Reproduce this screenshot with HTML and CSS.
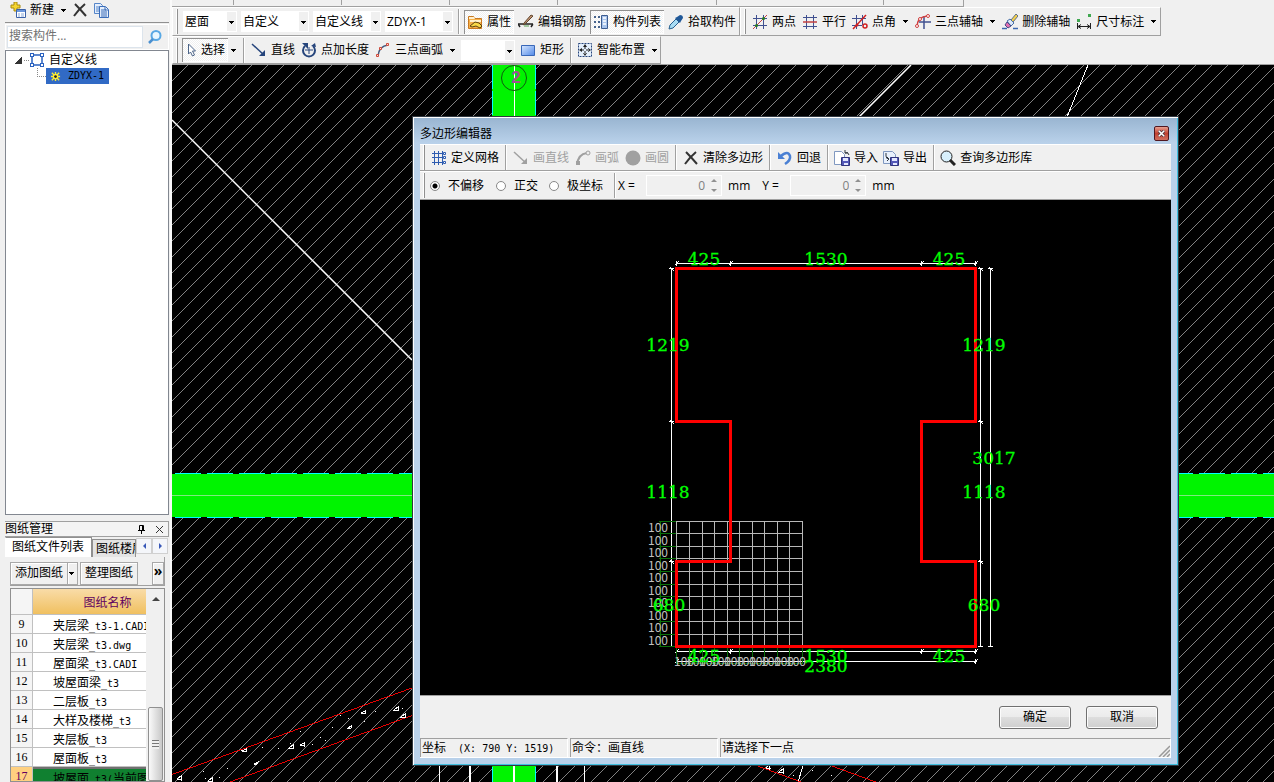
FILE: index.html
```html
<!DOCTYPE html>
<html lang="zh-CN">
<head>
<meta charset="utf-8">
<title>多边形编辑器</title>
<link rel="stylesheet" href="styles.css">
</head>
<body>
<svg class="defs" aria-hidden="true">
  <symbol id="i-new" viewBox="0 0 16 16"><path d="M4 0h3v3h3v3H7v3H4V6H1V3h3z" fill="#f5d530" stroke="#a88a10"/><path d="M6.500 7.500h9v8h-9z" fill="#fff" stroke="#3c62a8"/><path d="M7 8h8v2H7z" fill="#6a96dc"/><path d="M8 12h2M11 12h3M8 14h2M11 14h3" stroke="#8aa8d8"/></symbol>
  <symbol id="i-x" viewBox="0 0 16 16"><path d="M3 2Q8 7 14 14M13 2Q7 7 2 14" fill="none" stroke="#333" stroke-width="2"/></symbol>
  <symbol id="i-copy" viewBox="0 0 16 16"><path d="M1.500 1.500h6l2 2v8h-8z" fill="#e4eefc" stroke="#5585c8"/><path d="M3 5h5M3 7h5M3 9h4" stroke="#5585c8"/><path d="M6.500 4.500h6l3 3v8h-9z" fill="#e4eefc" stroke="#3b6db8"/><path d="M8 8h5M8 10h6M8 12h6M8 14h6M12 5v3h3" fill="none" stroke="#3b6db8"/></symbol>
  <symbol id="i-search" viewBox="0 0 16 16"><circle cx="9" cy="6.500" r="4.500" fill="#e8f7ff" stroke="#58a8e4" stroke-width="2"/><path d="M6 10l-4 4" stroke="#4a90d0" stroke-width="2.500"/></symbol>
  <symbol id="i-poly" viewBox="0 0 16 16"><path d="M3 3h10v10H3z" fill="#fff" stroke="#2a62c0" stroke-width="1.500"/><path d="M1 1h4v4H1zM11 1h4v4h-4zM1 11h4v4H1zM11 11h4v4h-4z" fill="#2a62c0"/><path d="M2 2h2v2H2zM12 2h2v2h-2zM2 12h2v2H2zM12 12h2v2h-2z" fill="#fff"/></symbol>
  <symbol id="i-gear" viewBox="0 0 12 12"><path d="M6 1v10M1 6h10M2 2l8 8M10 2l-8 8" stroke="#ffee30" stroke-width="1.500"/><circle cx="6" cy="6" r="3" fill="#ffee30"/><circle cx="6" cy="6" r="1.500" fill="#222"/></symbol>
  <symbol id="i-prop" viewBox="0 0 16 16"><path d="M1.500 14.500v-12h5l1 2h7v10z" fill="#f6b04a" stroke="#c87820"/><path d="M2 3h5l1 2H2zM3 6h11v2H3z" fill="#fff0cc"/><path d="M3 12l5-4 4 1 3 3-2 2-4-2-4 1z" fill="#f8d848" stroke="#5c4310"/></symbol>
  <symbol id="i-rebar" viewBox="0 0 16 16"><path d="M0 10h15M2 13L0 10M15 10l-2 3" fill="none" stroke="#222" stroke-width="1.500"/><path d="M6 9l7-8 2 1-7 7-3 2z" fill="#c09070" stroke="#604830"/><path d="M6 12h5" stroke="#58a050"/></symbol>
  <symbol id="i-list" viewBox="0 0 16 16"><path d="M1 2h2v2H1zM1 7h2v2H1zM1 12h2v2H1zM5 2h2v2H5zM5 7h2v2H5zM5 12h2v2H5z" fill="#47638c"/><path d="M8.500 1.500h6v13h-6z" fill="#a8c4ec" stroke="#3c5c90"/><path d="M10 4h3M10 7h3M10 10h3" stroke="#fff" stroke-width="1.500"/></symbol>
  <symbol id="i-pick" viewBox="0 0 16 16"><path d="M1 15l1-4 6-6 3 3-6 6z" fill="#a8dcf4" stroke="#276090"/><path d="M7 4l5 5 1-2 2-3q0-3-3-3l-3 2z" fill="#205898"/></symbol>
  <symbol id="i-two" viewBox="0 0 16 16"><path d="M4.500 1v14M11.500 1v14M1 4.500h14M1 11.500h14" stroke="#405090"/><path d="M1 15L15 1" stroke="#c84040"/><circle cx="4.500" cy="11.500" r="1.500" fill="#248024"/><circle cx="11.500" cy="4.500" r="1.500" fill="#248024"/></symbol>
  <symbol id="i-par" viewBox="0 0 16 16"><path d="M4.500 1v14M11.500 1v14M1 3.500h14M1 12.500h14" stroke="#405090"/><path d="M1 8h14" stroke="#c04040" stroke-width="1.500"/></symbol>
  <symbol id="i-ang" viewBox="0 0 16 16"><path d="M4.500 1v14M10.500 1v10M0 4.500h14M0 11.500h10" stroke="#405090"/><path d="M1 15L14 1" stroke="#d02020" stroke-width="1.500"/><circle cx="13" cy="12" r="2" fill="none" stroke="#d02020" stroke-width="1.500"/><circle cx="5" cy="11" r="1.500" fill="#d02020"/></symbol>
  <symbol id="i-three" viewBox="0 0 16 16"><path d="M9 2v13M4 8h12" stroke="#405090" stroke-width="1.500"/><path d="M2 13Q2 3 12 2" fill="none" stroke="#d04040" stroke-width="1.500"/><circle cx="2" cy="12" r="1.500" fill="#fff" stroke="#d04040"/><circle cx="5" cy="5" r="1.500" fill="#fff" stroke="#d04040"/><circle cx="13" cy="2" r="1.500" fill="#fff" stroke="#d04040"/></symbol>
  <symbol id="i-del" viewBox="0 0 16 16"><path d="M9 6l5-6 2 2-5 6z" fill="#f4d04c" stroke="#607088"/><path d="M5 7l3-2 4 4-3 3z" fill="#dce8f8" stroke="#4870a8"/><path d="M3 11l2-3 4 4-3 2z" fill="#e070b0" stroke="#484888"/><path d="M0 14.500h5M11 14.500h5" stroke="#3c68b0" stroke-width="1.500"/></symbol>
  <symbol id="i-dim" viewBox="0 0 16 16"><path d="M1.500 9v6M14.500 9v6M2 12.500h12M5 10.500l-3 2 3 2M11 10.500l3 2-3 2" fill="none" stroke="#222"/><path d="M1 5h3v3H1zM12 0h3v3h-3z" fill="#40a850"/></symbol>
  <symbol id="i-cursor" viewBox="0 0 12 16"><path d="M3.500 2v10l2-2 2 4 2-1-2-4h3z" fill="#fff" stroke="#4c6488"/></symbol>
  <symbol id="i-line" viewBox="0 0 16 16"><path d="M1 2l12 11" stroke="currentColor" stroke-width="1.500"/><path d="M14 8v6H8l2-2 1-1 1-1z" fill="currentColor"/></symbol>
  <symbol id="i-len" viewBox="0 0 16 16"><path d="M4 4a6 6 0 1 0 8 0" fill="none" stroke="#26457c" stroke-width="2"/><path d="M1 1h6v6zM15 5l-5-1 4-3z" fill="#26457c"/><path d="M8 5v7M4 8h8" stroke="#26457c"/></symbol>
  <symbol id="i-arc" viewBox="0 0 16 16"><path d="M3 14Q4 4 13 3" fill="none" stroke="#44587c" stroke-width="1.500"/><path d="M1.500 12.500h2v2h-2zM4.500 5.500h2v2h-2zM11.500 1.500h2v2h-2z" fill="#f8e0dc" stroke="#d04838"/></symbol>
  <symbol id="i-arc2" viewBox="0 0 16 16"><path d="M2 15Q3 4 12 3" fill="none" stroke="currentColor" stroke-width="2"/><path d="M1 11h4v4H1z" fill="currentColor"/><circle cx="13" cy="3" r="2" fill="#eee" stroke="currentColor"/></symbol>
  <symbol id="i-rect" viewBox="0 0 16 16"><path d="M1.500 3.500h13v10h-13z" fill="url(#g-blue)" stroke="#3867b8"/></symbol>
  <symbol id="i-smart" viewBox="0 0 16 16"><path d="M1.500 1.500h13v13h-13z" fill="#e4effc" stroke="#26457c" stroke-dasharray="2 1"/><path d="M8 2l2 3H6zM8 14l2-3H6zM2 8l3-2v4zM14 8l-3-2v4zM7.500 4h1v3h-1zM7.500 9h1v3h-1zM4 7.500h3v1H4zM9 7.500h3v1H9z" fill="#222"/></symbol>
  <symbol id="i-grid" viewBox="0 0 16 16"><path d="M3.500 1v14M7.500 1v14M11.500 1v14M1 3.500h14M1 7.500h14M1 12.500h14" stroke="#2e5cb0"/><path d="M12.500 2.500h2v2h-2zM12.500 6.500h2v2h-2zM12.500 11.500h2v2h-2z" fill="#fff" stroke="#2e5cb0"/></symbol>
  <symbol id="i-dot" viewBox="0 0 16 16"><circle cx="8" cy="8" r="7.500" fill="currentColor"/></symbol>
  <symbol id="i-undo" viewBox="0 0 16 16"><path d="M4 6Q11 0 13 6 14 10 8 14" fill="none" stroke="#4a80d4" stroke-width="2.500"/><path d="M1 2v7h7z" fill="#4a80d4"/></symbol>
  <symbol id="i-in" viewBox="0 0 16 16"><path d="M.5 1.500h7l3 3v10H.5z" fill="#fff" stroke="#8098c0"/><path d="M7.500 7.500h8v8h-8z" fill="#5458b8" stroke="#30347c"/><path d="M9 8h5v3H9zM10 13h4v2h-4z" fill="#e4e8ff"/><path d="M11 3q3-2 4 2M11 0v3h3" fill="none" stroke="#303840"/></symbol>
  <symbol id="i-out" viewBox="0 0 16 16"><path d="M.5 1.500h9l3 3v9H.5z" fill="#e8f0fc" stroke="#8098c0"/><path d="M7.500 7.500h8v8h-8z" fill="#5458b8" stroke="#30347c"/><path d="M9 8h5v3H9zM10 13h4v2h-4z" fill="#e4e8ff"/><path d="M3 3v3q0 3 3 3M4 7l2 2-2 2" fill="none" stroke="#303840"/></symbol>
  <symbol id="i-mag" viewBox="0 0 16 16"><circle cx="6.500" cy="6.500" r="5.500" fill="#d8f0fc" stroke="#222"/><path d="M10 10l5 5" stroke="#222" stroke-width="3"/></symbol>
  <linearGradient id="g-blue" x2="1" y2="1"><stop stop-color="#d8e8ff"/><stop offset="1" stop-color="#5088e8"/></linearGradient>
</svg>

<div class="app">
  <aside class="sidebar">
    <div class="side-tools">
      <button class="tool"><svg class="icon"><use href="#i-new"/></svg>新建<span class="arrow"></span></button>
      <button class="tool tight" aria-label="删除"><svg class="icon"><use href="#i-x"/></svg></button>
      <button class="tool" aria-label="复制"><svg class="icon"><use href="#i-copy"/></svg></button>
    </div>
    <div class="search">
      <input type="text" placeholder="搜索构件..." aria-label="搜索构件">
      <button class="search-btn" aria-label="搜索"><svg class="icon"><use href="#i-search"/></svg></button>
    </div>
    <div class="tree">
      <div class="tree-row"><span class="expander"></span><span class="twig"></span><svg class="icon"><use href="#i-poly"/></svg><span class="tree-root">自定义线</span></div>
      <div class="tree-row child"><span class="branch"></span><span class="leaf"><svg class="icon-leaf"><use href="#i-gear"/></svg><span class="mono">ZDYX-1</span></span></div>
    </div>
    <section class="dock">
      <header class="dock-title"><span>图纸管理</span>
        <svg class="pin" viewBox="0 0 9 9"><path d="M2.500 5V.5h4V5M1 5.500h7M4.500 6v3M5.500 1v4" fill="none" stroke="#000"/></svg>
        <svg class="pin" viewBox="0 0 9 9"><path d="M1 1l7 7M8 1L1 8" stroke="#333"/></svg>
      </header>
      <div class="tabs">
        <button class="tab active">图纸文件列表</button>
        <button class="tab clipped">图纸楼层</button>
        <button class="tab-nav left" aria-label="上一个"></button>
        <button class="tab-nav right" aria-label="下一个"></button>
      </div>
      <div class="dock-tools">
        <button class="flat">添加图纸</button><button class="flat drop" aria-label="更多"><span class="arrow"></span></button>
        <button class="flat gap">整理图纸</button><button class="flat more">»</button>
      </div>
      <div class="files">
        <div class="table-clip">
        <table>
          <thead><tr><th class="num"></th><th>图纸名称</th></tr></thead>
          <tbody>
            <tr><td class="num">9</td><td>夹层梁<span class="mono">_t3-1.CADI</span></td></tr>
            <tr><td class="num">10</td><td>夹层梁<span class="mono">_t3.dwg</span></td></tr>
            <tr><td class="num">11</td><td>屋面梁<span class="mono">_t3.CADI</span></td></tr>
            <tr><td class="num">12</td><td>坡屋面梁<span class="mono">_t3</span></td></tr>
            <tr><td class="num">13</td><td>二层板<span class="mono">_t3</span></td></tr>
            <tr><td class="num">14</td><td>大样及楼梯<span class="mono">_t3</span></td></tr>
            <tr><td class="num">15</td><td>夹层板<span class="mono">_t3</span></td></tr>
            <tr><td class="num">16</td><td>屋面板<span class="mono">_t3</span></td></tr>
            <tr class="current"><td class="num">17</td><td>坡屋面<span class="mono">_t3(</span>当前图</td></tr>
          </tbody>
        </table>
        </div>
        <div class="scroll"><span class="up"></span><span class="thumb"></span></div>
      </div>
    </section>
  </aside>

  <main class="main">
    <div class="bars">
      <div class="bar-cut"><i></i><i></i><i></i><i></i><i></i><i></i></div>
      <div class="bar-row">
        <div class="bar"><span class="grip wide"></span>
          <div class="combos">
            <span class="combo"><select aria-label="楼层"><option>屋面</option></select></span>
            <span class="combo"><select aria-label="类型"><option>自定义</option></select></span>
            <span class="combo"><select aria-label="构件类型"><option>自定义线</option></select></span>
            <span class="combo"><select aria-label="构件"><option>ZDYX-1</option></select></span>
          </div>
          <span class="sep"></span>
          <button class="tool pressed"><svg class="icon"><use href="#i-prop"/></svg>属性</button>
          <button class="tool"><svg class="icon"><use href="#i-rebar"/></svg>编辑钢筋</button>
          <button class="tool pressed"><svg class="icon"><use href="#i-list"/></svg>构件列表</button>
          <button class="tool"><svg class="icon"><use href="#i-pick"/></svg>拾取构件</button>
        </div>
        <div class="bar"><span class="grip"></span>
          <button class="tool"><svg class="icon"><use href="#i-two"/></svg>两点</button>
          <button class="tool"><svg class="icon"><use href="#i-par"/></svg>平行</button>
          <button class="tool"><svg class="icon"><use href="#i-ang"/></svg>点角<span class="arrow"></span></button>
          <button class="tool"><svg class="icon"><use href="#i-three"/></svg>三点辅轴<span class="arrow"></span></button>
          <button class="tool"><svg class="icon"><use href="#i-del"/></svg>删除辅轴</button>
          <button class="tool"><svg class="icon"><use href="#i-dim"/></svg>尺寸标注<span class="arrow"></span></button>
        </div>
      </div>
      <div class="bar-row last">
        <div class="bar"><span class="grip"></span>
          <button class="tool pressed"><svg class="icon narrow"><use href="#i-cursor"/></svg>选择</button>
          <button class="tool split" aria-label="选择方式"><span class="arrow"></span></button>
          <span class="sep"></span>
          <button class="tool navy"><svg class="icon"><use href="#i-line"/></svg><span>直线</span></button>
          <button class="tool"><svg class="icon"><use href="#i-len"/></svg>点加长度</button>
          <button class="tool"><svg class="icon"><use href="#i-arc"/></svg>三点画弧<span class="arrow"></span></button>
          <span class="combo blank"><select aria-label="参数"><option></option></select></span>
          <button class="tool"><svg class="icon"><use href="#i-rect"/></svg>矩形</button>
          <span class="sep"></span>
          <button class="tool tight"><svg class="icon"><use href="#i-smart"/></svg>智能布置<span class="arrow"></span></button>
        </div>
      </div>
    </div>

    <svg class="drawing" shape-rendering="crispEdges">
      <defs><pattern id="hatch" width="16" height="16" patternUnits="userSpaceOnUse"><path d="M-1 17L17 -1" stroke="#b8b8b8" stroke-width=".7"/></pattern></defs>
      <rect width="100%" height="100%" fill="#000"/>
      <rect width="100%" height="100%" fill="url(#hatch)"/>
      <g transform="translate(-172 -65)">
        <path d="M172 474h1102v43H172zM492 65h44v717h-44z" fill="#00f400"/>
        <path d="M172 473.500h1102M172 517.500h1102" stroke="#000"/>
        <path d="M175 473.500h1099M175 517.500h1099" stroke="#00ffff" stroke-dasharray="26 6"/>
        <path d="M172 495.500h1102" stroke="#80e880"/>
        <path d="M492.500 65v717M535.500 65v717" stroke="#00ffff" stroke-dasharray="24 2"/>
        <path d="M514.500 65v717" stroke="#fff"/>
        <text x="516" y="83" class="axis">2</text>
        <circle cx="514" cy="78" r="12.500" fill="none" stroke="#105810" shape-rendering="auto"/>
        <path d="M172 120L412 360M911 65L859 117" stroke="#fff" stroke-width="1.500" shape-rendering="auto"/>
        <path d="M1088 65L1067 117M439.500 765v17M584.500 765v17M803 766l-5 16" stroke="#fff"/>
        <path d="M470 765v17M514 765v17" stroke="#fff" stroke-width="2"/>
        <path d="M557 765v17" stroke="#fff" stroke-width="2"/>
        <path d="M172 774.500L412 688M230 782L412 715.500M755 765l46 17M829 765l47 17" stroke="#f00" stroke-width=".9"/>
        <path d="M203.500 771v1M219.500 777v1M241.500 750v1M254.500 763v1M262.500 747v1M278.500 748v1M290.500 743v1M300.500 731v1M312.500 744v1M325.500 740v1M332.500 727v1M348.500 718v1M364.500 721v1M375.500 711v1M402.500 708v1M205.500 778v1M227.500 768v1M340.500 715v1M320.500 737v1M770.500 768v1M778.500 772v1M793.500 775v1M812.500 770v1M831.500 775v1" stroke="#fff"/>
        <path d="M177 779l4-3v4zM208 781l4-3v4zM242 751l4-2v2zM254 764l4-2-2 3zM289 748l4-3v3zM300 745l4-2v3zM361 713l4-2v2zM347 729l4-3v2zM394 710l4-3v3zM401 717l4-3v3zM766 768l3-3v4zM779 772l4-3v4z" fill="none" stroke="#fff"/>
      </g>
    </svg>
  </main>

  <div class="dialog" role="dialog" aria-label="多边形编辑器">
    <header class="dialog-title"><span>多边形编辑器</span><button class="close" aria-label="关闭"><svg viewBox="0 0 9 9"><path d="M1 1l7 7M8 1L1 8" stroke="#50343c" stroke-width="4"/><path d="M1 1l7 7M8 1L1 8" stroke="#fff" stroke-width="2"/></svg></button></header>
    <div class="dialog-body">
      <div class="dbar"><span class="grip"></span>
        <button class="tool"><svg class="icon"><use href="#i-grid"/></svg>定义网格</button>
        <span class="sep"></span>
        <button class="tool" disabled><svg class="icon"><use href="#i-line"/></svg>画直线</button>
        <button class="tool" disabled><svg class="icon"><use href="#i-arc2"/></svg>画弧</button>
        <button class="tool" disabled><svg class="icon"><use href="#i-dot"/></svg>画圆</button>
        <span class="sep"></span>
        <button class="tool"><svg class="icon"><use href="#i-x"/></svg>清除多边形</button>
        <span class="sep"></span>
        <button class="tool"><svg class="icon"><use href="#i-undo"/></svg>回退</button>
        <span class="sep"></span>
        <button class="tool tight"><svg class="icon"><use href="#i-in"/></svg>导入</button>
        <button class="tool"><svg class="icon"><use href="#i-out"/></svg>导出</button>
        <span class="sep"></span>
        <button class="tool tight"><svg class="icon"><use href="#i-mag"/></svg>查询多边形库</button>
      </div>
      <div class="dbar second"><span class="grip"></span>
        <label class="radio"><input type="radio" name="offset" checked>不偏移</label>
        <label class="radio"><input type="radio" name="offset">正交</label>
        <label class="radio"><input type="radio" name="offset">极坐标</label>
        <span class="sep tail"></span>
        <label class="coord"><span class="axis-name">X =</span><span class="spin"><input type="text" value="0" disabled></span>mm</label>
        <label class="coord"><span class="axis-name">Y =</span><span class="spin"><input type="text" value="0" disabled></span>mm</label>
      </div>
      <div class="stage">
      <svg class="plan" viewBox="420 200 751 495" shape-rendering="crispEdges">
        <g class="white">
          <path d="M676 263.500h301M676 651.500h301M676 661.500h301M671.500 268v379M980.500 268v379M990.500 268v379"/>
          <path d="M676.500 261v5M730.500 261v5M921.500 261v5M975.500 261v5M676.500 649v5M730.500 649v5M921.500 649v5M975.500 649v5M676.500 659v5M975.500 659v5M669 268.500h5M669 421.500h5M669 561.500h5M669 646.500h5M978 268.500h5M978 421.500h5M978 561.500h5M978 646.500h5M988 268.500h5M988 646.500h5"/>
          <path d="M675 265l4-4M729 265l4-4M920 265l4-4M974 265l4-4M675 653l4-4M729 653l4-4M920 653l4-4M974 653l4-4M675 663l4-4M974 663l4-4M670 267l4 4M670 420l4 4M670 560l4 4M979 267l4 4M979 420l4 4M979 560l4 4M989 267l4 4"/>
        </g>
        <path class="mesh" d="M676.500 521v125M689.500 521v125M702.500 521v125M714.500 521v125M727.500 521v125M739.500 521v125M752.500 521v125M764.500 521v125M777.500 521v125M789.500 521v125M802.500 521v125M676 521.500h127M676 533.500h127M676 546.500h127M676 558.500h127M676 571.500h127M676 584.500h127M676 596.500h127M676 609.500h127M676 621.500h127M676 634.500h127M676 646.500h127"/>
        <path class="ticks" d="M660.500 521v126M659 521.500h17M659 533.500h17M659 546.500h17M659 558.500h17M659 571.500h17M659 584.500h17M659 596.500h17M659 609.500h17M659 621.500h17M659 634.500h17M659 646.500h17M676 663.500h127M676.500 647v17M689.500 647v17M702.500 647v17M714.500 647v17M727.500 647v17M739.500 647v17M752.500 647v17M764.500 647v17M777.500 647v17M789.500 647v17M802.500 647v17"/>
        <path class="shape" d="M676.500 268.500H975.500V421.500H921.500V561.500H975.500V646.500H676.500V561.500H730.500V421.500H676.500z"/>
        <g class="small">
          <text x="658" y="532">100</text><text x="658" y="545">100</text><text x="658" y="557">100</text><text x="658" y="570">100</text><text x="658" y="582">100</text><text x="658" y="595">100</text><text x="658" y="607">100</text><text x="658" y="620">100</text><text x="658" y="632">100</text><text x="658" y="645">100</text>
          <text x="684" y="666">100</text><text x="696" y="666">100</text><text x="709" y="666">100</text><text x="721" y="666">100</text><text x="734" y="666">100</text><text x="746" y="666">100</text><text x="759" y="666">100</text><text x="771" y="666">100</text><text x="784" y="666">100</text><text x="796" y="666">100</text>
        </g>
        <g class="dims">
          <text x="704" y="265">425</text><text x="826" y="265">1530</text><text x="949" y="265">425</text>
          <text x="668" y="351">1219</text><text x="984" y="351">1219</text>
          <text x="668" y="498">1118</text><text x="984" y="498">1118</text><text x="994" y="464">3017</text>
          <text x="669" y="611">680</text><text x="984" y="611">680</text>
          <text x="704" y="662">425</text><text x="826" y="662">1530</text><text x="949" y="662">425</text><text x="826" y="672">2380</text>
        </g>
      </svg>
      </div>
      <div class="actions"><button class="push">确定</button><button class="push">取消</button></div>
      <footer class="status">
        <span class="cell">坐标<span class="mono">  (X: 790 Y: 1519)</span></span>
        <span class="cell">命令：画直线</span>
        <span class="cell rest">请选择下一点</span>
        <svg class="size-grip" viewBox="0 0 12 12"><path d="M1 12L12 1M5 12l7-7M9 12l3-3" stroke="#999" stroke-width="1.500"/></svg>
      </footer>
    </div>
  </div>
</div>
</body>
</html>
```

FILE: styles.css
```css
* { box-sizing: border-box; }
body {
  margin: 0;
  background: #f0f0f0;
  color: #000;
  font: 12px/16px "Open Sans", "Noto Sans CJK SC", sans-serif;
}
button, input, select { font: inherit; color: inherit; }
button { border: 0; padding: 0; background: none; white-space: nowrap; }
.defs { position: absolute; width: 0; height: 0; }
.app {
  position: relative;
  display: grid;
  grid-template-columns: 172px minmax(0, 1fr);
  height: 100vh;
  overflow: hidden;
}
.mono { font-family: "DejaVu Sans Mono", monospace; font-size: 10px; line-height: 10px; white-space: pre; }
.icon { width: 16px; height: 16px; flex: none; }
.icon.narrow { width: 12px; }
.arrow {
  flex: none;
  width: 13px;
  height: 3px;
  margin-left: -4px;
  background: linear-gradient(#000, #000) 7px 0 / 5px 1px no-repeat,
    linear-gradient(#000, #000) 8px 1px / 3px 1px no-repeat,
    linear-gradient(#000, #000) 9px 2px / 1px 1px no-repeat;
}

/* toolbar parts */
.tool { display: flex; align-items: center; gap: 4px; height: 22px; padding: 0 3px; }
.tool:disabled { color: #a0a0a0; }
.tool.tight { padding: 0 2px; }
.pressed {
  height: 24px;
  margin: 0 1px;
  background: repeating-conic-gradient(#fff 0 25%, #f0f0f0 0 50%) 0 0 / 2px 2px;
  box-shadow: inset 1px 1px #909090, inset -1px -1px #fff;
}
.split { padding: 0; }
.split .arrow { width: 11px; margin: 0; background-position: 2px 0, 3px 1px, 4px 2px; }
.navy .icon { color: #26457c; }
.sep { flex: none; width: 2px; height: 25px; margin: 0 3px; background: linear-gradient(90deg, #a0a0a0 50%, #fff 50%); }
.grip { flex: none; width: 2px; height: 25px; margin-right: 3px; background: linear-gradient(90deg, #fff 50%, #909090 50%); }
.grip.wide { margin-right: 5px; }
.bars { flex: none; border-bottom: 1px solid #a0a0a0; }
.bar-cut {
  display: grid;
  grid-template-columns: 59px 108px 108px 108px 159px 167px;
  width: 792px;
  height: 7px;
  padding-left: 3px;
  border-right: 1px solid #a0a0a0;
  border-bottom: 1px solid #a0a0a0;
}
.bar-cut i { height: 5px; border-right: 1px solid #a0a0a0; }
.bar-row { display: flex; height: 29px; }
.bar-row.last { height: 28px; }
.bar { display: flex; align-items: center; padding-left: 3px; border: 1px solid #fff; border-right-color: #a0a0a0; border-bottom-color: #a0a0a0; }
.combos { display: grid; grid-template-columns: 54px 68px 68px 68px; gap: 4px; padding-right: 2px; }
.combo { position: relative; display: flex; height: 21px; background: #fff; border: 1px solid #fff; }
.combo::after {
  content: "";
  width: 9px;
  flex: none;
  background: linear-gradient(#000, #000) 2px 9px / 5px 1px no-repeat,
    linear-gradient(#000, #000) 3px 10px / 3px 1px no-repeat,
    linear-gradient(#000, #000) 4px 11px / 1px 1px no-repeat, #f0f0f0;
}
.combo select { flex: 1; min-width: 0; appearance: none; border: 0; padding: 0 0 0 1px; background: #fff; }
.combo.blank { width: 54px; margin: 0 2px; }

/* sidebar */
.sidebar { display: flex; flex-direction: column; min-height: 0; padding: 0 1px 0 5px; border-right: 2px solid #fafafa; }
.side-tools { display: flex; align-items: center; flex: none; height: 23px; padding: 0 2px 2px; border-bottom: 1px solid #909090; }
.search { display: flex; flex: none; height: 26px; margin: 1px 0 0; padding: 1px; border: 1px solid #fff; }
.search input { flex: 1; min-width: 0; border: 1px solid #dce4ec; padding: 0 1px 3px; background: #fff; }
.search input::placeholder { color: #707070; opacity: 1; }
.search-btn { display: flex; align-items: center; justify-content: center; width: 24px; }
.tree { flex: 1; min-height: 0; padding-top: 1px; border: 1px solid #828790; background: #fff; }
.tree-row { display: flex; align-items: center; height: 16px; padding-left: 9px; }
.expander { width: 7px; height: 7px; background: linear-gradient(135deg, #fff 50%, #333 50%); }
.twig { width: 5px; margin: 0 0 0 2px; border-top: 1px dotted #888; }
.tree-root { margin-left: 4px; }
.child { padding-left: 31px; }
.branch { width: 9px; height: 9px; margin-bottom: 8px; border-left: 1px dotted #888; border-bottom: 1px dotted #888; }
.leaf { display: flex; align-items: center; gap: 7px; height: 16px; padding: 0 5px 0 4px; background: #316ac5; }
.icon-leaf { width: 11px; height: 11px; }
.dock { flex: none; height: 267px; padding-top: 6px; overflow: hidden; }
.dock-title { display: flex; align-items: center; gap: 9px; height: 16px; padding-right: 4px; border: 1px solid #a0a0a0; border-left: 0; background: #f4f4f4; }
.dock-title span { flex: 1; }
.pin { width: 9px; height: 9px; }
.tabs { display: flex; align-items: end; height: 20px; padding-right: 1px; background: #f0f0f0; }
.tab { height: 18px; border: 1px solid #909090; border-bottom: 0; }
.tab.active { height: 20px; padding: 0 7px 2px 6px; background: #fff; border-left-color: #fff; }
.tab.clipped { flex: 1; min-width: 0; padding-left: 3px; overflow: hidden; text-align: left; background: #e4e4e4; }
.tab-nav { width: 16px; height: 16px; margin-bottom: 3px; border: 1px solid #d0d0d0; background: #f4f6fa; }
.tab-nav::after { content: ""; display: block; width: 0; height: 0; margin-left: 6px; border: solid transparent; border-width: 3px 0; }
.tab-nav.left::after { border-right: 3px solid #3858b8; }
.tab-nav.right::after { border-left: 3px solid #3858b8; }
.dock-tools { display: flex; align-items: center; height: 29px; margin: 0 4px 2px 5px; padding-top: 4px; border-right: 1px solid #a0a0a0; border-bottom: 1px solid #a0a0a0; }
.flat { height: 23px; padding: 0 4px; border: 1px solid #a8a8a8; background: #f0f0f0; box-shadow: inset 1px 1px #fff; }
.flat.drop { width: 10px; padding: 0; border-left: 0; }
.flat.drop .arrow { display: block; width: 8px; margin: 0; background-position: 1px 0, 2px 1px, 3px 2px; }
.flat.gap { margin-left: 2px; }
.flat.more { width: 12px; padding: 0 0 6px; margin-left: auto; font-size: 14px; font-weight: 700; }
.files { display: flex; height: 194px; margin: 0 4px 0 5px; border: 1px solid #909090; background: #f0f0f0; overflow: hidden; }
.table-clip { flex: 1; min-width: 0; overflow: hidden; background: #fff; }
table { width: 100%; table-layout: fixed; border-collapse: separate; border-spacing: 0; font-family: "Noto Sans CJK SC", sans-serif; }
th { height: 26px; padding: 0 0 0 36px; background: linear-gradient(#f9dca8, #f0c060); border-bottom: 1px solid #c0c0c0; color: #600060; font-weight: 400; }
td { height: 19px; padding: 1px 0 0 20px; border-bottom: 1px solid #c0c0c0; line-height: 17px; white-space: nowrap; overflow: hidden; }
.num { width: 22px; padding: 0; border-right: 1px solid #c0c0c0; background: #f5f5f5; text-align: center; font-family: "Liberation Serif", serif; }
.current td { padding-top: 0; background: #108030; border-top: 2px solid #707070; }
.current td.num { background: #ffd080; border-top: 0; color: #600060; }
.scroll { display: flex; flex-direction: column; flex: none; width: 18px; padding: 0 1px 0 2px; }
.scroll .up { width: 0; height: 0; margin: 8px auto 106px 4px; border: 4px solid transparent; border-top: 0; border-bottom: 4px solid #444; }
.scroll .thumb {
  height: 74px;
  border: 1px solid #909090;
  border-radius: 2px;
  background: repeating-linear-gradient(#777 0 1px, #eee 1px 3px) center / 7px 9px no-repeat, linear-gradient(90deg, #fafafa, #c8c8c8);
}

/* drawing area */
.main { display: flex; flex-direction: column; min-width: 0; min-height: 0; }
.drawing { display: block; flex: 1; width: 100%; min-height: 0; }
.axis { font: 700 17px "Liberation Sans", sans-serif; fill: #a05090; text-anchor: middle; }

/* polygon editor window */
.dialog {
  position: absolute;
  inset: 116px 95px 16px 412px;
  display: flex;
  flex-direction: column;
  padding: 0 6px 7px;
  border: 1px solid #303840;
  background: linear-gradient(#98b4d0, #b9d1ea 26px);
  box-shadow: inset 1px 1px #fff, inset -1px -1px #40c0e0;
}
.dialog-title { display: flex; align-items: center; justify-content: space-between; flex: none; height: 27px; padding: 6px 3px 0 1px; }
.close { display: flex; align-items: center; justify-content: center; width: 15px; height: 15px; border: 1px solid #501820; border-radius: 2px; background: linear-gradient(#e8a090, #c04030 50%, #d07060); }
.close svg { width: 7px; height: 7px; }
.dialog-body { display: flex; flex: 1; flex-direction: column; min-height: 0; margin: 0 1px; background: #f0f0f0; }
.dbar { display: flex; align-items: center; flex: none; height: 27px; padding-left: 3px; border-top: 1px solid #fff; border-bottom: 1px solid #a0a0a0; }
.dbar.second { height: 29px; }
.radio { display: flex; align-items: center; gap: 8px; margin-right: 11px; }
.radio input { appearance: none; width: 10px; height: 10px; margin: 0; border: 1px solid #888; border-radius: 50%; background: #fff; }
.radio:first-of-type { margin-left: 2px; margin-right: 12px; }
.radio input:checked { background: radial-gradient(#000 0 2px, #fff 3px); }
.sep.tail { margin: 0 2px 0 0; }
.coord { display: flex; align-items: center; margin-right: 12px; }
.axis-name { width: 28px; }
.spin { position: relative; display: flex; width: 76px; height: 21px; margin-right: 6px; border: 1px solid #fff; }
.spin input { width: 58px; border: 0; padding: 0; background: transparent; color: #808080; text-align: right; }
.spin::before, .spin::after { content: ""; position: absolute; right: 4px; border: 3px solid transparent; }
.spin::before { top: 3px; border-top: 0; border-bottom-color: #909090; }
.spin::after { bottom: 3px; border-bottom: 0; border-top-color: #909090; }
.stage { flex: 1; min-height: 0; background: #000; }
.plan { display: block; width: 100%; height: 100%; }
.plan path { fill: none; }
.white { stroke: #fff; }
.mesh { stroke: #b8b8b8; }
.ticks { stroke: #087008; }
.plan .shape { stroke: #f00; stroke-width: 3; }
.plan text { text-anchor: middle; }
.small { font: 12px "Noto Sans CJK SC", sans-serif; fill: #c0c0c0; }
.dims { font: 17px "DejaVu Serif", serif; fill: #00ff00; stroke: #00ff00; stroke-width: .3; }
.actions { display: flex; align-items: center; justify-content: flex-end; gap: 15px; flex: none; height: 43px; padding-right: 13px; border-top: 1px solid #a0a0a0; }
.push { width: 72px; height: 23px; border: 1px solid #707070; border-radius: 3px; background: linear-gradient(#f2f2f2, #ebebeb 50%, #ddd 50%, #cfcfcf); box-shadow: inset 0 0 0 1px #fcfcfc; }
.status { position: relative; display: flex; gap: 2px; flex: none; height: 20px; border-bottom: 1px solid #fff; }
.cell { width: 148px; padding: 1px 1px 0; border: 1px solid #a0a0a0; border-right-color: #fff; border-bottom: 0; white-space: nowrap; }
.cell.rest { flex: 1; }
.size-grip { position: absolute; right: 1px; bottom: 0; width: 12px; height: 12px; }
```
